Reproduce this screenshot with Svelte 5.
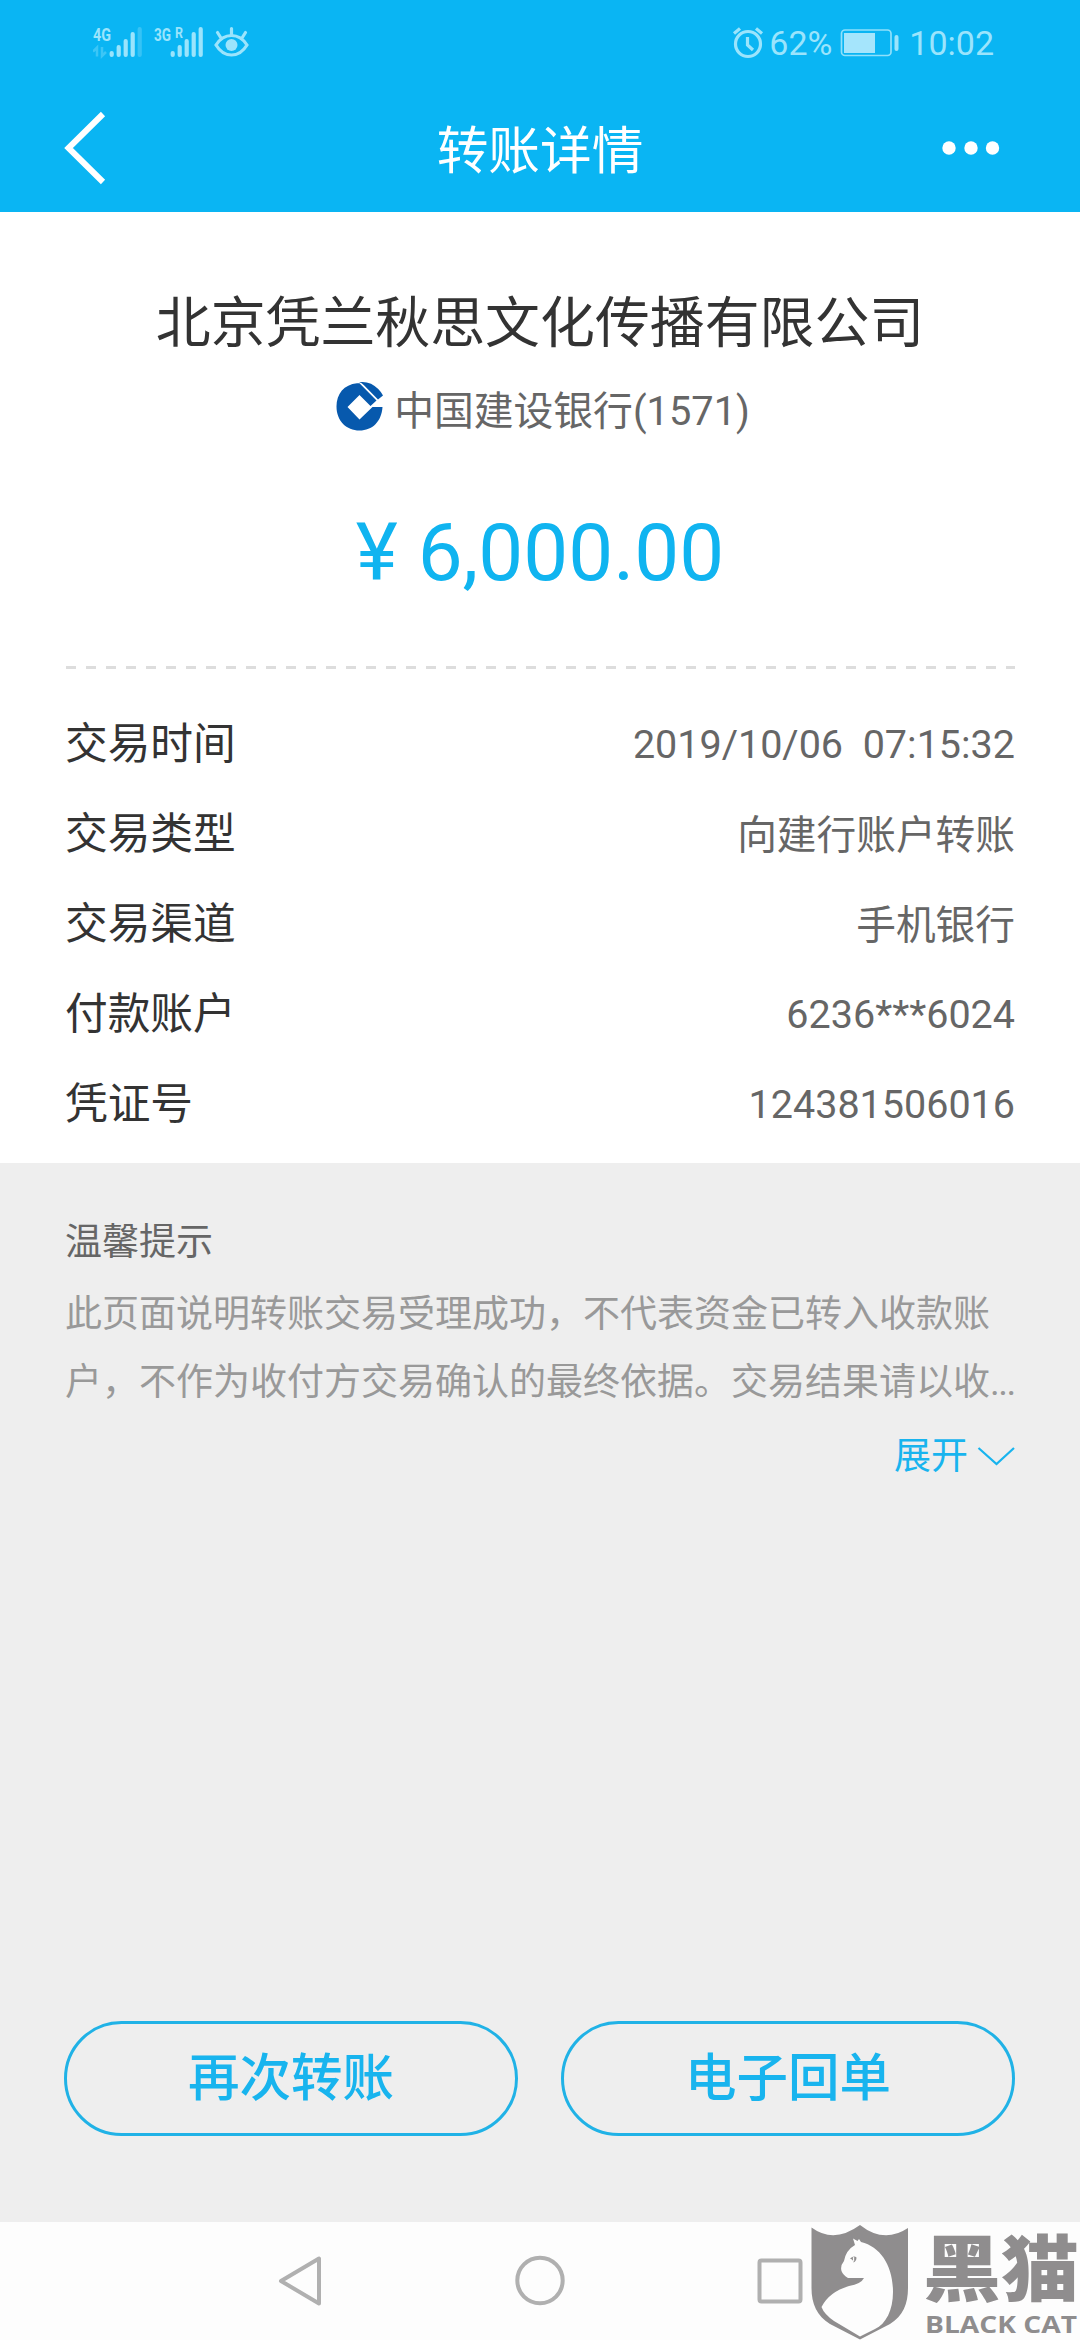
<script>
  const rows = [
    { label: '交易时间', value: '2019/10/06\u00a0\u00a007:15:32', numeric: true },
    { label: '交易类型', value: '向建行账户转账' },
    { label: '交易渠道', value: '手机银行' },
    { label: '付款账户', value: '6236***6024', numeric: true },
    { label: '凭证号', value: '124381506016', numeric: true }
  ];
  const actions = ['再次转账', '电子回单'];
</script>

<div class="screen">
  <header>
    <div class="status">
      <svg class="signals" width="160" height="44" viewBox="0 0 160 44">
        <g fill="#9be4fc" font-family="Roboto" font-weight="700">
          <text x="0" y="19.500" font-size="19" textLength="18" lengthAdjust="spacingAndGlyphs">4G</text>
          <text x="61" y="19.500" font-size="19" textLength="17" lengthAdjust="spacingAndGlyphs">3G</text>
          <text x="82" y="17" font-size="15" textLength="8" lengthAdjust="spacingAndGlyphs">R</text>
        </g>
        <g stroke="#9be4fc" stroke-width="4.2" stroke-linecap="round">
          <path d="M18.700 32v2M25.700 26v8M32.700 20v14M39.700 13v21" />
          <path d="M79.700 32v2M86.700 26v8M93.700 20v14M100.700 13v21M107.700 8v26" />
          <path d="M46.700 8v26" opacity=".3" />
        </g>
        <path d="M0 30.500l4-4v9M9 26v9l4-4" fill="none" stroke="#9be4fc" stroke-width="2.500" opacity=".35" />
        <g fill="none" stroke="#9be4fc" stroke-width="3.200" stroke-linecap="round">
          <path d="M123 24Q129 14.500 138.500 14.500T154 24Q148 34 138.500 34T123 24Z" />
          <path d="M138.500 14V7.500M128 17L124.500 11.500M149 17L152.500 11.500" />
        </g>
        <circle cx="138.500" cy="24" r="6" fill="#9be4fc" />
      </svg>
      <div class="status-right">
        <svg width="32" height="34" viewBox="0 0 32 34" fill="none" stroke="#9be4fc" stroke-width="3.200">
          <circle cx="16" cy="18" r="12.500" />
          <path d="M15.500 11v8l5.500 5M2 7.500l6-5M24 2.500l6 5" />
        </svg>
        <span class="pct">62%</span>
        <svg class="battery" width="60" height="30" viewBox="0 0 60 30">
          <rect x="1.500" y="2" width="49.500" height="25.500" rx="3.500" fill="none" stroke="#8fe0fb" stroke-width="1.700" />
          <rect x="4" y="5" width="31" height="20" fill="#a5e5fc" />
          <rect x="54.500" y="7" width="4" height="16" rx="2" fill="#9be4fc" />
        </svg>
        <span class="clock">10:02</span>
      </div>
    </div>
    <div class="titlebar">
      <svg width="60" height="76" viewBox="0 0 60 76"><path d="M41 4L6.500 38L41 72" fill="none" stroke="#fff" stroke-width="6" /></svg>
      <h1>转账详情</h1>
      <svg class="more" width="60" height="16" viewBox="0 0 60 16" fill="#fff"><circle cx="8" cy="8" r="6.700" /><circle cx="30" cy="8" r="6.700" /><circle cx="51.500" cy="8" r="6.700" /></svg>
    </div>
  </header>

  <main>
    <h2>北京凭兰秋思文化传播有限公司</h2>
    <div class="bank">
      <svg width="48" height="50" viewBox="0 0 48 50">
        <path fill="#0759ad" d="M21 2.300C8 3.500.5 13 .5 25.500C.5 40 10.500 49.500 23.500 49.500C36.500 49.500 45.500 40.500 46.500 26H36.500L23.500 38.500L11.500 26L23.500 14L34.500 25L40.500 19.500L23.500 2.300Z" />
        <path fill="#0759ad" d="M23 1.300Q29 .3 35 2.800Q43.500 7.500 47 14.500L42 18.500L28 4.300Q26 2 23 1.300Z" />
      </svg>
      <span>中国建设银行(1571)</span>
    </div>
    <p class="amount">¥ 6,000.00</p>
    <div class="divider"></div>
    <dl>
      {#each rows as row}
        <div class="row"><dt>{row.label}</dt><dd class:numeric={row.numeric}>{row.value}</dd></div>
      {/each}
    </dl>
  </main>

  <section class="tips">
    <h3>温馨提示</h3>
    <p>此页面说明转账交易受理成功，不代表资金已转入收款账</p>
    <p>户，不作为收付方交易确认的最终依据。交易结果请以收<span class="dots">...</span></p>
    <div class="expand">
      <span>展开</span>
      <svg width="38" height="20" viewBox="0 0 38 20"><path d="M1.500 1L19.500 17L37 1" fill="none" stroke="#18b4ee" stroke-width="2.200" /></svg>
    </div>
  </section>

  <div class="actions">
    {#each actions as action}<button>{action}</button>{/each}
  </div>

  <nav>
    <svg width="1080" height="118" viewBox="0 0 1080 118">
      <g fill="none" stroke="#b0b0b0" stroke-width="4" stroke-linejoin="round">
        <path d="M319 36.500V81.500L281 59Z" />
        <circle cx="540" cy="58.500" r="22.700" />
        <rect x="759.500" y="38.500" width="41" height="41" rx="2" />
      </g>
      <path fill="#8f8d8e" d="M811.500 5.500Q834 22 860 3Q884 22 908 6V66C908 82 903 94 890 102L860 117.500L830 102C817 94 811.500 82 811.500 66Z" />
      <path fill="#fdfdfd" d="M853 16.500L857.500 19L859 17L861 20C881 25 893 44 893 70C893 88 886 102 875 107L860 114.500L834 99Q824 92 821.500 85Q829 70 849 64Q861 62 864 56L848 56Q843 53 841.500 49Q840 44 844 39Q846 28 855 23Z" />
      <path fill="#8f8d8e" d="M850 36.500Q854 33 856.500 35.500Q856.500 39 853.500 40.500Q853.500 38 850 36.500Z" />
      <path fill="#fdfdfd" d="M852.800 35.200l1.400-.2v4.200l-1 .6z" />
      <g fill="#8f8d8e">
        <text class="mark-cn" x="923" y="73" textLength="156" lengthAdjust="spacingAndGlyphs">黑猫</text>
        <text class="mark-en" x="925" y="110.500" textLength="152" lengthAdjust="spacingAndGlyphs">BLACK CAT</text>
      </g>
    </svg>
  </nav>
</div>

<style>
  :global(body) { margin: 0; }
  .screen {
    width: 1080px; height: 2340px; overflow: hidden;
    display: flex; flex-direction: column;
    background: #eee; color: #333;
    font-family: Roboto, 'Noto Sans CJK SC', sans-serif;
  }
  h1, h2, h3, p, dl, dd, dt { margin: 0; font-weight: 400; }
  svg { display: block; flex: none; }
  header { height: 212px; background: #0ab5f3; }
  .status { height: 86px; display: flex; justify-content: space-between; align-items: center; padding: 0 86px 0 93px; box-sizing: border-box; }
  .status-right { display: flex; align-items: center; color: #9be4fc; font-size: 34px; line-height: 40px; }
  .pct { width: 62px; margin-left: 5px; }
  .battery { margin: 0 9px; }
  .titlebar { height: 126px; display: grid; grid-template-columns: 1fr auto 1fr; align-items: center; padding: 0 62px; }
  .titlebar svg { margin-bottom: 2px; }
  .titlebar .more { justify-self: end; margin-right: 17px; }
  h1 { color: #fff; font-size: 51.700px; line-height: 70px; padding-top: 5px; }
  main { height: 951px; box-sizing: border-box; background: #fff; padding: 73px 65px 0; }
  h2 { font-size: 54.900px; line-height: 76px; text-align: center; }
  .bank { display: flex; justify-content: center; gap: 10px; margin-top: 20px; padding-left: 6px; height: 60px; line-height: 62px; font-size: 39.800px; color: #666; }
  .amount { margin-top: 62px; height: 100px; line-height: 100px; font-size: 80px; text-align: center; color: #10b4f0; }
  .divider { height: 3px; margin: 63px 0 0 1px; background: repeating-linear-gradient(90deg, #ddd 0 10px, transparent 10px 20px); }
  dl { margin-top: 30px; }
  .row { display: flex; justify-content: space-between; align-items: center; height: 90px; }
  dt { font-size: 42.700px; padding-bottom: 8px; }
  dd { font-size: 39.700px; color: #666; padding-bottom: 5px; }
  dd.numeric { font-size: 39.500px; padding-bottom: 0; }
  .tips { height: 813px; padding: 45px 65px 0; font-size: 37px; color: #999; }
  h3 { font-size: 37px; line-height: 70px; color: #666; }
  .tips p { line-height: 68px; white-space: nowrap; }
  .tips h3 + p { margin-top: 3px; }
  .dots { letter-spacing: -1.500px; }
  .expand { display: flex; justify-content: flex-end; align-items: center; gap: 9px; margin-top: 6px; line-height: 68px; color: #18b4ee; font-size: 37px; }
  .actions { flex: 1; display: flex; justify-content: space-between; align-items: flex-start; padding: 0 65px 0 64px; }
  button { width: 454px; height: 115px; border: 3px solid #20b2e6; border-radius: 58px; background: transparent; color: #18b4ee; font: 500 51.500px/100px Roboto, 'Noto Sans CJK SC', sans-serif; padding: 0; }
  nav { height: 118px; background: #fdfdfd; }
  nav svg { overflow: visible; }
  .mark-cn { font: 900 72px 'Noto Sans CJK SC', sans-serif; }
  .mark-en { font: 700 23px 'Open Sans', sans-serif; }
</style>
